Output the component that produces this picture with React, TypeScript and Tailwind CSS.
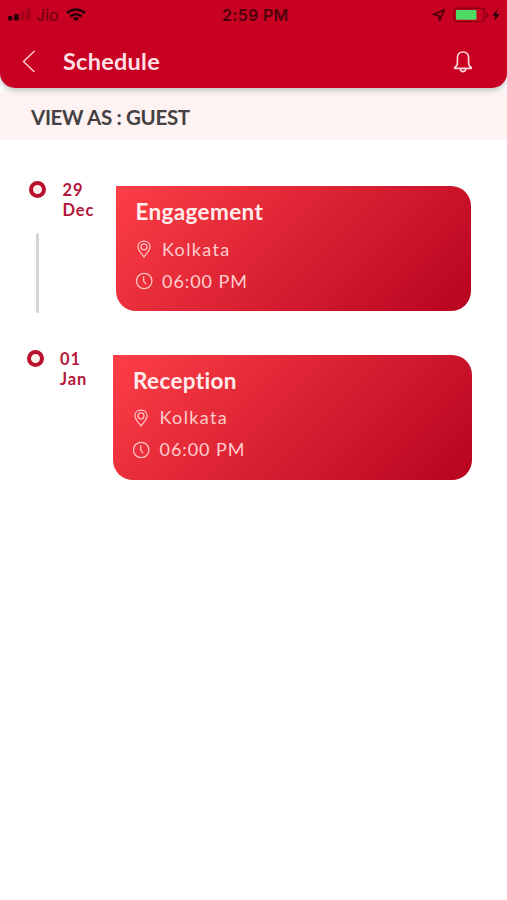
import React from "react";

type ScheduleEvent = {
  day: string;
  month: string;
  title: string;
  place: string;
  time: string;
  row: string;
  date: string;
  card: string;
  line: boolean;
};

const events: ScheduleEvent[] = [
  {
    day: "29",
    month: "Dec",
    title: "Engagement",
    place: "Kolkata",
    time: "06:00 PM",
    row: "pl-[29px] pt-[41px]",
    date: "w-[53.5px] pl-[16.5px]",
    card: "w-[355.5px] mt-[5px]",
    line: true,
  },
  {
    day: "01",
    month: "Jan",
    title: "Reception",
    place: "Kolkata",
    time: "06:00 PM",
    row: "pl-[27px] pt-[37px]",
    date: "w-[53px] pl-[16px]",
    card: "w-[359px] mt-[4.5px]",
    line: false,
  },
];

function StatusBar() {
  return (
    <div className="flex h-[29px] items-center font-[Inter,sans-serif] text-[#4d000c]">
      <div className="flex w-[222px] items-center pl-[8px]">
        <svg width="24" height="13" viewBox="0 0 24 13" fill="#2c0008">
          <rect x="0" y="8" width="4.5" height="4.5" rx="1" />
          <rect x="6" y="6" width="4.8" height="6.5" rx="1" />
          <rect x="12.3" y="3.5" width="4.2" height="9" rx="1" fill="#a6001b" />
          <rect x="18.3" y="0.5" width="4.4" height="12" rx="1" fill="#a6001b" />
        </svg>
        <span className="ml-[4px] w-[22px] text-[16px] leading-none text-[#6a0012]">Jio</span>
        <svg className="ml-[8px]" width="20" height="14" viewBox="0 0 20 14" fill="none" stroke="#2c0008" strokeWidth="2.7">
          <path d="M1 5.2C6 .4 14 .4 19 5.2" />
          <path d="M4.3 8.5C7.5 5.5 12.5 5.5 15.7 8.5" />
          <path d="M10 13.4 6.8 10.3c1.8-1.6 4.6-1.6 6.4 0Z" fill="#2c0008" stroke="none" />
        </svg>
      </div>
      <span className="w-[210px] whitespace-nowrap text-[16px] font-semibold leading-none tracking-[0.3px]">2:59 PM</span>
      <svg width="14" height="14" viewBox="0 0 14 14" fill="none" stroke="#4d000c" strokeWidth="1.6" strokeLinejoin="round">
        <path d="M1.2 6.5 12.2 1.8 7.6 12.4 6.6 7.5Z" />
      </svg>
      <svg className="ml-[7px]" width="37" height="16" viewBox="0 0 37 16">
        <rect x="1" y="1.2" width="30.5" height="13.4" rx="3.2" fill="none" stroke="#8c0017" strokeWidth="1.4" />
        <rect x="3" y="3.1" width="20.5" height="9.7" rx="1" fill="#4ddb64" />
        <path d="M33.3 5.2c2.5.8 2.5 4.7 0 5.5Z" fill="#8c0017" />
      </svg>
      <svg className="ml-[1px]" width="10" height="14" viewBox="0 0 10 14" fill="#2c0008">
        <path d="M6.4 1 1.5 7.8h2.9L3.2 13 8.8 5.9H5.5Z" />
      </svg>
    </div>
  );
}

function BellIcon() {
  return (
    <svg width="20" height="24" viewBox="0 0 20 24" fill="none" stroke="#ffd3da" strokeWidth="1.6" strokeLinejoin="round">
      <path d="M10 2c-3.8 0-5.6 2.6-5.6 6v5c0 2.200-.9 3.500-2.700 4.500v.9h16.600v-.9c-1.800-1-2.700-2.300-2.700-4.500V8c0-3.400-1.800-6-5.600-6Z" />
      <path d="M7.200 18.600c.2 1.900 1.300 3 2.800 3s2.600-1.100 2.800-3" />
    </svg>
  );
}

function PinIcon() {
  return (
    <svg width="17" height="18" viewBox="0 0 17 18" fill="none" stroke="#ffc4c4" strokeWidth="1.25">
      <path d="M8 1c-3.600 0-6.100 2.500-6.100 5.800C1.900 10.400 6 14 8 17c2-3 6.100-6.600 6.100-10.200C14.100 3.500 11.600 1 8 1Z" />
      <circle cx="8" cy="6.8" r="3" />
    </svg>
  );
}

function ClockIcon() {
  return (
    <svg width="17" height="18" viewBox="0 0 17 18" fill="none" stroke="#ffc4c4" strokeWidth="1.25" strokeLinecap="round">
      <circle cx="8.2" cy="9" r="7.7" />
      <path d="M7.700 4.500V9l2.200 3" />
    </svg>
  );
}

function EventRow({ event }: { event: ScheduleEvent }) {
  return (
    <section className={`flex items-start ${event.row}`}>
      <div className="flex w-[17px] flex-col items-center">
        <span className="h-[17px] w-[17px] rounded-full border-[4.5px] border-[#b9102b] bg-[#fff1ec]" />
        {event.line && <span className="mt-[35px] h-[80px] w-[3px] rounded-full bg-[#d5d5d5]" />}
      </div>
      <div className={`text-[16.5px] font-bold leading-[20px] tracking-[0.9px] text-[#b3173a] ${event.date}`}>
        <div className="-mt-[1.5px]">{event.day}</div>
        <div>{event.month}</div>
      </div>
      <article
        className={`ml-[16px] h-[125px] rounded-[20px] rounded-tl-none bg-[linear-gradient(135deg,#fd3f46_0%,#b5021f_102%)] pl-[20px] pt-[12px] ${event.card}`}
      >
        <h2 className="text-[22.5px] font-bold leading-[28px] tracking-[0.35px] text-[#ffecec]">{event.title}</h2>
        <div className="mt-[10px] flex h-[26px] items-center text-[18px] tracking-[1.35px] text-[#ffcdcd]">
          <PinIcon />
          <span className="ml-[9.5px]">{event.place}</span>
        </div>
        <div className="mt-[6px] flex h-[26px] items-center text-[18px] tracking-[0.95px] text-[#ffcdcd]">
          <ClockIcon />
          <span className="ml-[9.5px]">{event.time}</span>
        </div>
      </article>
    </section>
  );
}

export default function App() {
  return (
    <main className="h-[900px] w-[507px] overflow-hidden bg-white font-[Lato,sans-serif]">
      <div className="bg-[linear-gradient(#fbfbfb_88px,#fff2f2_94px)]">
        <header className="relative h-[88px] rounded-b-[15px] bg-[#c80021] shadow-[0_3px_5px_rgba(0,0,0,0.2)]">
          <StatusBar />
          <div className="flex h-[65px] items-center pl-[22px] pr-[34px]">
            <svg width="14" height="23" viewBox="0 0 14 23" fill="none" stroke="#ffc9d1" strokeWidth="1.5">
              <path d="M12.500 1 1.500 11.500l11 10.500" />
            </svg>
            <h1 className="ml-[27px] flex-1 text-[23.5px] font-bold leading-none tracking-[0.25px] text-[#ffdfe3]">Schedule</h1>
            <BellIcon />
          </div>
        </header>
        <div className="flex h-[52px] items-center pl-[31px] pt-[7px] text-[20.5px] font-bold tracking-[-0.35px] text-[#454041]">
          VIEW AS : GUEST
        </div>
      </div>
      {events.map((event) => (
        <EventRow key={event.title} event={event} />
      ))}
    </main>
  );
}
